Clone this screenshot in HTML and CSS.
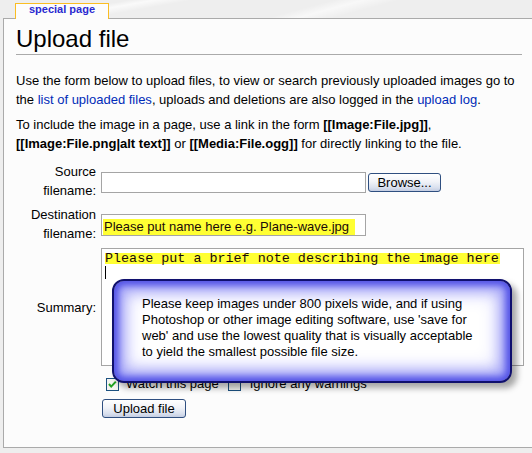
FILE: index.html
```html
<!DOCTYPE html>
<html lang="en">
<head>
    <meta charset="UTF-8">
    <title>Upload file</title>
    <link rel="stylesheet" href="styles.css">
</head>
<body>

<div class="page">
    <div class="tab">special page</div>
    <div class="content">
        <h1>Upload file</h1>
        <p>Use the form below to upload files, to view or search previously uploaded images go to the <a href="#">list of uploaded files</a>, uploads and deletions are also logged in the <a href="#">upload log</a>.</p>
        <p>To include the image in a page, use a link in the form <b>[[Image:File.jpg]]</b>, <b>[[Image:File.png|alt text]]</b> or <b>[[Media:File.ogg]]</b> for directly linking to the file.</p>

        <div class="upload-form">
            <div class="label">Source<br>filename:</div>
            <div class="field">
                <span class="input file-input"></span>
                <span class="btn browse">Browse...</span>
            </div>

            <div class="label">Destination<br>filename:</div>
            <div class="field">
                <span class="input dest-input"><span class="mark">Please put name here e.g. Plane-wave.jpg</span></span>
            </div>

            <div class="label">Summary:</div>
            <div class="field">
                <div class="textarea">
                    <span class="note">Please put a brief note describing the image here</span>
                    <span class="caret"></span>
                    <div class="balloon">
                        Please keep images under 800 pixels wide, and if using<br>
                        Photoshop or other image editing software, use 'save for<br>
                        web' and use the lowest quality that is visually acceptable<br>
                        to yield the smallest possible file size.
                    </div>
                </div>
            </div>

            <div></div>
            <div class="field checks">
                <svg class="checkbox" width="13" height="13" viewBox="0 0 13 13">
                    <rect x="0.5" y="0.5" width="12" height="12" fill="#f4f4f0" stroke="#1c5180"/>
                    <polyline points="3,6 5.2,8.6 9.8,3.6" fill="none" stroke="#21a121" stroke-width="2"/>
                </svg>
                <span class="check-text">Watch this page</span>
                <svg class="checkbox" width="13" height="13" viewBox="0 0 13 13">
                    <rect x="0.5" y="0.5" width="12" height="12" fill="#f4f4f0" stroke="#1c5180"/>
                </svg>
                <span class="check-text">Ignore any warnings</span>
            </div>

            <div></div>
            <div class="field">
                <span class="btn upload">Upload file</span>
            </div>
        </div>
    </div>
</div>

</body>
</html>
```

FILE: styles.css
```css
body {
    margin: 0;
    font-family: "Liberation Sans", Arial, sans-serif;
    font-size: 13px;
    color: #000;
    overflow: hidden;
    background:
        linear-gradient(170deg, transparent 20%, rgba(255, 255, 255, 0.7) 24%, transparent 30%),
        linear-gradient(165deg, transparent 55%, rgba(255, 255, 255, 0.6) 60%, transparent 66%),
        #eeeeee;
    background-size: 100% 20px, 100% 20px, auto;
    background-repeat: no-repeat;
}
.page {
    padding-top: 3px;
}
.tab {
    position: relative;
    z-index: 1;
    margin-left: 15px;
    margin-bottom: -1px;
    width: 92px;
    height: 15px;
    border: 1px solid #fabd23;
    border-bottom: 0;
    background: #fcfcfc;
    color: #2a2ad0;
    font-size: 11px;
    font-weight: bold;
    line-height: 11px;
    text-align: center;
}
.content {
    box-sizing: border-box;
    height: 430px;
    margin-left: 3px;
    margin-right: -3px;
    padding: 6px 12px 0;
    border: 1px solid #aaa;
    background: #fcfcfc;
}
h1 {
    margin: 0;
    padding-bottom: 1px;
    font-size: 24px;
    font-weight: normal;
    line-height: 28px;
    border-bottom: 1px solid #aaa;
}
p {
    margin: 6px 0 0;
    line-height: 19px;
}
h1 + p {
    margin-top: 16px;
}
a {
    color: #002bb8;
    text-decoration: none;
}

/* form */
.upload-form {
    display: grid;
    grid-template-columns: 80px 1fr;
    column-gap: 5px;
    row-gap: 5px;
    align-items: center;
    margin-top: 9px;
    line-height: 19px;
}
.label {
    text-align: right;
}
.field {
    display: flex;
    align-items: center;
}
.input {
    box-sizing: border-box;
    display: block;
    width: 265px;
    border: 1px solid #a5a5a5;
    background: #fff;
}
.file-input {
    height: 21px;
    margin-top: 2px;
}
.dest-input {
    height: 22px;
    padding: 2px 0 0 1px;
    margin-top: 2px;
}
.mark {
    display: inline-block;
    height: 16px;
    padding: 0 6px 0 1px;
    line-height: 16px;
    background: #ffff33;
    color: #1a0a0a;
}
.btn {
    box-sizing: border-box;
    display: inline-block;
    height: 19px;
    line-height: 17px;
    text-align: center;
    border: 1px solid #2f4f80;
    border-radius: 3px;
    background: linear-gradient(#ffffff, #f1f3f8 45%, #d9e0ee 80%, #c3cde2);
}
.browse {
    width: 73px;
    margin-left: 2px;
    margin-top: 2px;
}
.textarea {
    position: relative;
    box-sizing: border-box;
    width: 423px;
    height: 118px;
    padding: 4px 3px;
    border: 1px solid #a5a5a5;
    background: #fff;
    line-height: 11px;
}
.note {
    display: block;
    width: fit-content;
    height: 11px;
    padding-right: 1px;
    font-family: "Liberation Mono", "Courier New", monospace;
    font-size: 13.4px;
    background: #ffff33;
    color: #1a0a0a;
}
.caret {
    display: block;
    width: 1px;
    height: 13px;
    margin-top: 2px;
    background: #000;
}
.balloon {
    position: absolute;
    z-index: 2;
    left: 10px;
    top: 30px;
    box-sizing: border-box;
    width: 400px;
    height: 104px;
    padding: 15px 0 0 28px;
    border: 2px solid #10106e;
    border-radius: 12px;
    background: #fff;
    box-shadow:
        inset 0 0 6px 4px #5252e6,
        inset 0 0 14px 9px #9a9af6,
        inset 0 0 20px 12px #d6d6fd,
        5px 5px 6px rgba(0, 0, 0, 0.35);
    font-size: 13px;
    line-height: 16px;
    white-space: nowrap;
}
.checks {
    padding-top: 3px;
}
.checkbox {
    margin: 1px 7px 0 5px;
}
.checks .checkbox + .check-text + .checkbox {
    margin-left: 9px;
    margin-right: 9px;
}
.upload {
    width: 84px;
    margin: 1px 0 0 1px;
}
```
